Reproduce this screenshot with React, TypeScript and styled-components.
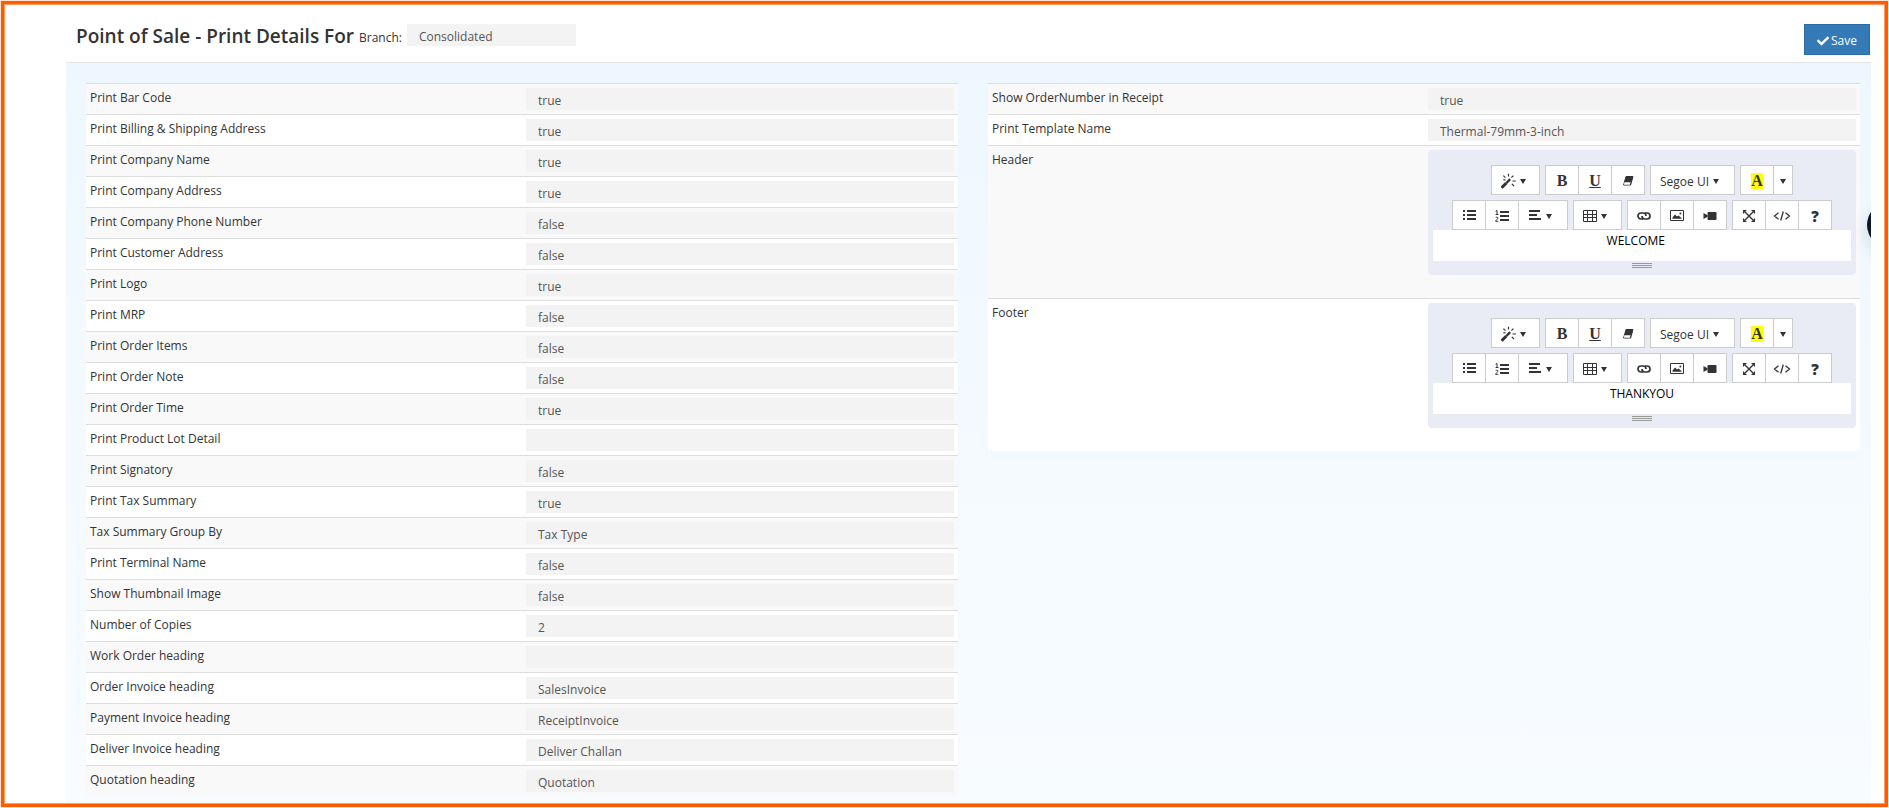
import React from 'react';
import styled, { createGlobalStyle } from 'styled-components';
import { FaCheck } from 'react-icons/fa';

const GlobalStyle = createGlobalStyle`
  *, *::before, *::after { box-sizing: border-box; }
  body {
    margin: 0;
    background: #fff;
    color: #333;
    font-family: 'Segoe UI', 'Open Sans', sans-serif;
    font-size: 12px;
    line-height: 19px;
  }
  button, input, select { font: inherit; color: inherit; }
`;

const Page = styled.div`
  min-height: 100vh;
  padding: 1px;
  display: flex;
`;

const Frame = styled.div`
  flex: 1;
  display: flex;
  flex-direction: column;
  border: 3px solid #ff5a00;
  outline: 1px solid #ffe3d0;
  box-shadow: inset 0 0 0 1px #ff9a60;
  padding: 1px 14px 1px 62px;
`;

const Header = styled.header`
  display: flex;
  justify-content: space-between;
  align-items: flex-start;
  height: 58px;
  padding: 19px 1px 0 10px;
  border-bottom: 1px solid #e2e4e6;
`;

const Heading = styled.div`
  display: flex;
  align-items: flex-start;
  gap: 5px;
`;

const Title = styled.h1`
  margin: 0;
  font-size: 19px;
  line-height: 24px;
  font-weight: 600;
`;

const BranchLabel = styled.label`
  padding-top: 4px;
`;

const fieldStyle = `
  display: block;
  width: 100%;
  height: 22px;
  margin: 0;
  padding: 2px 12px 0;
  border: 0;
  border-radius: 0;
  background: #f3f3f3;
  color: #555;
  appearance: none;
`;

const Select = styled.select`
  ${fieldStyle}
`;

const TextInput = styled.input`
  ${fieldStyle}
`;

const BranchField = styled.div`
  width: 169px;
`;

const SaveButton = styled.button`
  display: flex;
  align-items: center;
  justify-content: center;
  gap: 2px;
  width: 66px;
  height: 31px;
  padding: 2px 0 0;
  border: 1px solid #2e6da4;
  background: #337ab7;
  color: #fff;
  cursor: pointer;
`;

const Panel = styled.main`
  position: relative;
  flex: 1;
  display: grid;
  grid-template-columns: 1fr 1fr;
  gap: 30px;
  align-items: start;
  padding: 20px 11px 7px 20px;
  overflow: hidden;
  background: linear-gradient(#eef6ff, #f0f8ff 15%, #f8fcff);
`;

const Table = styled.table`
  width: 100%;
  table-layout: fixed;
  border-collapse: separate;
  border-spacing: 0;
`;

const Row = styled.tr`
  background: #fff;
  &:nth-child(odd) { background: #f9f9f9; }
`;

const Cell = styled.td`
  padding: 4px;
  border-top: 1px solid #ddd;
  vertical-align: top;
`;

const Editor = styled.div`
  display: flex;
  flex-direction: column;
  margin-bottom: 19px;
  padding: 15px 5px 0;
  border-radius: 4px;
  background: #e9ecf4;
`;

const Toolbar = styled.div`
  display: flex;
  flex-direction: column;
  gap: 5px;
`;

const ToolRow = styled.div`
  display: flex;
  justify-content: center;
  gap: 5px;
`;

const Group = styled.div`
  display: flex;
`;

const Tool = styled.button<{ $width?: number; $menu?: boolean }>`
  display: flex;
  align-items: center;
  justify-content: ${(p) => (p.$menu ? 'flex-start' : 'center')};
  gap: 4px;
  width: ${(p) => p.$width ?? 34}px;
  height: 30px;
  padding: 2px ${(p) => (p.$menu ? 9 : 0)}px 0;
  border: 1px solid #ccc;
  background: #fff;
  white-space: nowrap;
  cursor: pointer;
  & + & { margin-left: -1px; }
`;

const Glyph = styled.span<{ $underline?: boolean }>`
  font-family: 'Liberation Serif', serif;
  font-size: 16px;
  line-height: 16px;
  font-weight: 700;
  text-decoration: ${(p) => (p.$underline ? 'underline' : 'none')};
`;

const Highlight = styled(Glyph)`
  background: #ff0;
`;

const HelpGlyph = styled.span`
  font-size: 15px;
  font-weight: 800;
`;

const Editable = styled.div`
  height: 31px;
  padding: 1px 4px;
  background: #fff;
  color: #000;
  text-align: center;
  white-space: pre;
  outline: 0;
`;

const StatusBar = styled.div`
  display: flex;
  flex-direction: column;
  align-items: center;
  gap: 1px;
  height: 14px;
  padding-top: 2px;
`;

const Grip = styled.span`
  width: 20px;
  height: 1px;
  background: #999;
`;

const FloatingButton = styled.button`
  position: absolute;
  top: 139px;
  right: -42px;
  width: 46px;
  height: 46px;
  padding: 0;
  border: 0;
  border-radius: 50%;
  background: #0d1526;
  box-shadow: 0 6px 16px rgba(13, 21, 38, 0.15);
`;

const Caret = () => (
  <svg width="6" height="5" viewBox="0 0 6 5" aria-hidden="true">
    <path d="M0 0h6L3 5z" fill="#333" />
  </svg>
);

const Icon = ({ children }: { children: React.ReactNode }) => (
  <svg width="14" height="14" viewBox="0 0 14 14" fill="none" stroke="#333" aria-hidden="true">
    {children}
  </svg>
);

const MagicIcon = () => (
  <svg width="15" height="16" viewBox="0 0 15 16" fill="none" stroke="#333" aria-hidden="true">
    <path d="M.6 14.800 5.400 10" strokeWidth="3" />
    <path d="M5.400 10 9.200 6.200" strokeWidth="2.400" />
    <path d="M7.500.8v2.800M2.400 2.600l2 2M12.400 2.600l-2 2M11.500 8h3.300M10.800 10.800l2.200 2.200M2.400 6.600l2.200.4" strokeWidth="1.200" />
  </svg>
);

const EraserIcon = () => (
  <Icon>
    <path d="M5 2.500h7L9.600 11H2.600z" fill="#333" />
    <path d="M3.400 8.200h6.200l-.8 2.500H2.900z" fill="#fff" stroke="none" />
  </Icon>
);

const BulletIcon = () => (
  <Icon>
    <path d="M1 2h2M1 6h2M1 10h2M5 2h9M5 6h9M5 10h9" strokeWidth="2" />
  </Icon>
);

const NumberIcon = () => (
  <Icon>
    <path d="M5 3h9M5 7h9M5 11h9" strokeWidth="2" />
    <path d="M.6 2.200 2 1.500v4M.6 5.500h2.800M.7 8.800c.4-1 2.300-1 2.200.3 0 1-2 1.900-2.300 3.200h2.700" />
  </Icon>
);

const AlignIcon = () => (
  <Icon>
    <path d="M1 2h11M1 6h8M1 10h12" strokeWidth="2" />
  </Icon>
);

const TableIcon = () => (
  <Icon>
    <path d="M.5 1.500h13v11H.5zM.5 5.500h13M.5 8.500h13M4.500 1.500v11M9.500 1.500v11" />
  </Icon>
);

const LinkIcon = () => (
  <Icon>
    <path d="M6 10H4a3 3 0 0 1 0-6h2.400c1.500 0 2.600 1.200 2.600 3" strokeWidth="1.700" />
    <path d="M8 4h2a3 3 0 0 1 0 6H7.600C6.100 10 5 8.800 5 7" strokeWidth="1.700" />
  </Icon>
);

const PictureIcon = () => (
  <Icon>
    <path d="M.5 1.500h13v10H.5z" />
    <path d="M2.500 9.800V8.500L5 5.600l2 2 1.500-1L11.500 9v.8z" fill="#333" stroke="none" />
    <circle cx="10.400" cy="4.400" r="1" fill="#333" stroke="none" />
  </Icon>
);

const VideoIcon = () => (
  <Icon>
    <rect x="4.500" y="3" width="9" height="8" rx="1" fill="#333" stroke="none" />
    <path d="M.5 4 4.500 6.200v1.600L.5 10z" fill="#333" stroke="none" />
  </Icon>
);

const FullscreenIcon = () => (
  <Icon>
    <path d="M3 3l8 8M11 3l-8 8" strokeWidth="1.400" />
    <path d="M1 1h4L1 5zM13 1v4L9 1zM1 13V9l4 4zM13 13H9l4-4z" fill="#333" stroke="none" />
  </Icon>
);

const CodeIcon = () => (
  <svg width="18" height="14" viewBox="0 0 18 14" fill="none" stroke="#333" aria-hidden="true">
    <path d="M5.500 3.800 1.500 7l4 3.200M12.500 3.800l4 3.200-4 3.200M10.300 2.500l-2.600 9" strokeWidth="1.300" />
  </svg>
);

function RichEditor({ label, text }: { label: string; text: string }) {
  return (
    <Editor>
      <Toolbar role="toolbar" aria-label={`${label} formatting`}>
        <ToolRow>
          <Group>
            <Tool type="button" $menu $width={49} aria-label="Style"><MagicIcon /><Caret /></Tool>
          </Group>
          <Group>
            <Tool type="button" aria-label="Bold"><Glyph>B</Glyph></Tool>
            <Tool type="button" aria-label="Underline"><Glyph $underline>U</Glyph></Tool>
            <Tool type="button" aria-label="Remove font style"><EraserIcon /></Tool>
          </Group>
          <Group>
            <Tool type="button" $menu $width={85} aria-label="Font family">Segoe UI<Caret /></Tool>
          </Group>
          <Group>
            <Tool type="button" aria-label="Recent color"><Highlight>A</Highlight></Tool>
            <Tool type="button" $width={20} aria-label="More colors"><Caret /></Tool>
          </Group>
        </ToolRow>
        <ToolRow>
          <Group>
            <Tool type="button" aria-label="Unordered list"><BulletIcon /></Tool>
            <Tool type="button" aria-label="Ordered list"><NumberIcon /></Tool>
            <Tool type="button" $menu $width={50} aria-label="Paragraph"><AlignIcon /><Caret /></Tool>
          </Group>
          <Group>
            <Tool type="button" $menu $width={49} aria-label="Table"><TableIcon /><Caret /></Tool>
          </Group>
          <Group>
            <Tool type="button" aria-label="Link"><LinkIcon /></Tool>
            <Tool type="button" aria-label="Picture"><PictureIcon /></Tool>
            <Tool type="button" aria-label="Video"><VideoIcon /></Tool>
          </Group>
          <Group>
            <Tool type="button" aria-label="Full screen"><FullscreenIcon /></Tool>
            <Tool type="button" aria-label="Code view"><CodeIcon /></Tool>
            <Tool type="button" aria-label="Help"><HelpGlyph>?</HelpGlyph></Tool>
          </Group>
        </ToolRow>
      </Toolbar>
      <Editable role="textbox" aria-label={label} contentEditable suppressContentEditableWarning>{text}</Editable>
      <StatusBar><Grip /><Grip /><Grip /></StatusBar>
    </Editor>
  );
}

type Kind = 'select' | 'text' | 'editor';
type Setting = { label: string; value: string; kind: Kind };

const flag = (label: string, value: string): Setting => ({ label, value, kind: 'select' });
const text = (label: string, value: string): Setting => ({ label, value, kind: 'text' });
const editor = (label: string, value: string): Setting => ({ label, value, kind: 'editor' });

const printSettings: Setting[] = [
  flag('Print Bar Code', 'true'),
  flag('Print Billing & Shipping Address', 'true'),
  flag('Print Company Name', 'true'),
  flag('Print Company Address', 'true'),
  flag('Print Company Phone Number', 'false'),
  flag('Print Customer Address', 'false'),
  flag('Print Logo', 'true'),
  flag('Print MRP', 'false'),
  flag('Print Order Items', 'false'),
  flag('Print Order Note', 'false'),
  flag('Print Order Time', 'true'),
  flag('Print Product Lot Detail', ''),
  flag('Print Signatory', 'false'),
  flag('Print Tax Summary', 'true'),
  flag('Tax Summary Group By', 'Tax Type'),
  flag('Print Terminal Name', 'false'),
  flag('Show Thumbnail Image', 'false'),
  text('Number of Copies', '2'),
  text('Work Order heading', ''),
  text('Order Invoice heading', 'SalesInvoice'),
  text('Payment Invoice heading', 'ReceiptInvoice'),
  text('Deliver Invoice heading', 'Deliver Challan'),
  text('Quotation heading', 'Quotation'),
];

const templateSettings: Setting[] = [
  flag('Show OrderNumber in Receipt', 'true'),
  flag('Print Template Name', 'Thermal-79mm-3-inch'),
  editor('Header', 'WELCOME\u00a0\u00a0\u00a0\u00a0'),
  editor('Footer', 'THANKYOU'),
];

function SettingRow({ label, value, kind }: Setting) {
  const id = label.toLowerCase().replace(/[^a-z]+/g, '-');
  return (
    <Row>
      <Cell>{kind === 'editor' ? label : <label htmlFor={id}>{label}</label>}</Cell>
      <Cell>
        {kind === 'select' && (
          <Select id={id} defaultValue={value}><option>{value}</option></Select>
        )}
        {kind === 'text' && <TextInput id={id} type="text" defaultValue={value} />}
        {kind === 'editor' && <RichEditor label={label} text={value} />}
      </Cell>
    </Row>
  );
}

function SettingsTable({ settings }: { settings: Setting[] }) {
  return (
    <Table>
      <tbody>
        {settings.map((s) => <SettingRow key={s.label} {...s} />)}
      </tbody>
    </Table>
  );
}

export default function App() {
  return (
    <>
      <GlobalStyle />
      <Page>
        <Frame>
          <Header>
            <Heading>
              <Title>Point of Sale - Print Details For</Title>
              <BranchLabel htmlFor="branch">Branch:</BranchLabel>
              <BranchField>
                <Select id="branch" defaultValue="Consolidated"><option>Consolidated</option></Select>
              </BranchField>
            </Heading>
            <SaveButton type="button"><FaCheck size={12} aria-hidden="true" />Save</SaveButton>
          </Header>
          <Panel>
            <SettingsTable settings={printSettings} />
            <SettingsTable settings={templateSettings} />
            <FloatingButton type="button" aria-label="Open help" />
          </Panel>
        </Frame>
      </Page>
    </>
  );
}
